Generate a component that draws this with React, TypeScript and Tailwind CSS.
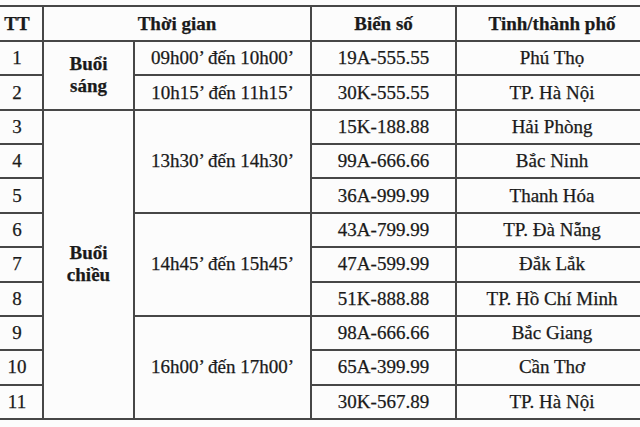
import * as React from 'react';

type Row = { tt: number; plate: string; city: string };

const rows: Row[] = [
  { tt: 1, plate: '19A-555.55', city: 'Phú Thọ' },
  { tt: 2, plate: '30K-555.55', city: 'TP. Hà Nội' },
  { tt: 3, plate: '15K-188.88', city: 'Hải Phòng' },
  { tt: 4, plate: '99A-666.66', city: 'Bắc Ninh' },
  { tt: 5, plate: '36A-999.99', city: 'Thanh Hóa' },
  { tt: 6, plate: '43A-799.99', city: 'TP. Đà Nẵng' },
  { tt: 7, plate: '47A-599.99', city: 'Đắk Lắk' },
  { tt: 8, plate: '51K-888.88', city: 'TP. Hồ Chí Minh' },
  { tt: 9, plate: '98A-666.66', city: 'Bắc Giang' },
  { tt: 10, plate: '65A-399.99', city: 'Cần Thơ' },
  { tt: 11, plate: '30K-567.89', city: 'TP. Hà Nội' },
];

// session cell: label lines + rowSpan, keyed by the first row it starts on
const sessions: Record<number, { label: string[]; span: number }> = {
  1: { label: ['Buổi', 'sáng'], span: 2 },
  3: { label: ['Buổi', 'chiều'], span: 9 },
};

// time slot cells, keyed by the first row
const slots: Record<number, { text: string; span: number }> = {
  1: { text: '09h00’ đến 10h00’', span: 1 },
  2: { text: '10h15’ đến 11h15’', span: 1 },
  3: { text: '13h30’ đến 14h30’', span: 3 },
  6: { text: '14h45’ đến 15h45’', span: 3 },
  9: { text: '16h00’ đến 17h00’', span: 3 },
};

// quirks mode: tables don't inherit font, so every cell names it
const cell =
  "border-2 border-[#474747] text-center align-middle p-0 font-['Liberation_Serif','Times_New_Roman',serif] text-[19px] leading-[22px] text-[#1a1a1a] [-webkit-text-stroke:0.25px_#1a1a1a]";

export default function App(): React.ReactElement {
  return (
    <div className="w-[640px] h-[427px] overflow-hidden bg-[#fcfcfc] pt-[5px]">
      <table className="ml-[-10px] w-[657px] table-fixed border-collapse">
        <colgroup>
          <col className="w-[52px]" />
          <col className="w-[91px]" />
          <col className="w-[177px]" />
          <col className="w-[145px]" />
          <col className="w-[192px]" />
        </colgroup>
        <thead>
          <tr className="h-[35px]">
            <th className={`${cell} font-bold`}>TT</th>
            <th className={`${cell} font-bold`} colSpan={2}>Thời gian</th>
            <th className={`${cell} font-bold`}>Biển số</th>
            <th className={`${cell} font-bold`}>Tinh/thành phố</th>
          </tr>
        </thead>
        <tbody>
          {rows.map((r) => (
            <tr key={r.tt} className="h-[34.36px]">
              <td className={cell}>{r.tt}</td>
              {sessions[r.tt] && (
                <td className={`${cell} font-bold`} rowSpan={sessions[r.tt].span}>
                  {sessions[r.tt].label.map((l) => (
                    <div key={l}>{l}</div>
                  ))}
                </td>
              )}
              {slots[r.tt] && (
                <td className={cell} rowSpan={slots[r.tt].span}>
                  {slots[r.tt].text}
                </td>
              )}
              <td className={cell}>{r.plate}</td>
              <td className={cell}>{r.city}</td>
            </tr>
          ))}
        </tbody>
      </table>
    </div>
  );
}
